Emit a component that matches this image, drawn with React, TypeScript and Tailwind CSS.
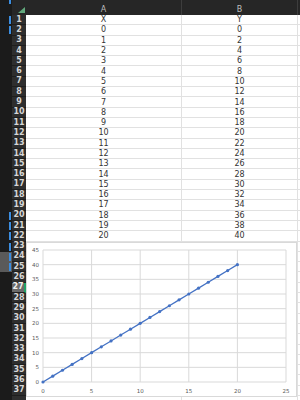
import React from 'react';

const rows = Array.from({ length: 38 }, (_, i) => i + 1);
const blueRows = [1, 2, 20, 21, 22, 23, 24, 25];

const cellValue = (row: number, col: 'A' | 'B') => {
  if (row === 1) return col === 'A' ? 'X' : 'Y';
  if (row >= 2 && row <= 22) {
    const x = row - 2;
    return String(col === 'A' ? x : x * 2);
  }
  return '';
};

// plot area inside the chart box
const px = (v: number) => 16 + (v / 25) * 243;
const py = (v: number) => 139 - (v / 45) * 132;

const Chart = () => {
  const points = Array.from({ length: 21 }, (_, i) => ({ x: i, y: i * 2 }));
  return (
    <div className="absolute left-[26px] top-[242px] w-[271px] h-[155px] bg-white border border-[#d9d9d9]">
      <svg width="271" height="155" className="block" style={{ fontFamily: '"DejaVu Sans", Verdana, sans-serif' }}>
        {[0, 5, 10, 15, 20, 25, 30, 35, 40, 45].map((v) => (
          <g key={`h${v}`}>
            <line x1={px(0)} x2={px(25)} y1={py(v)} y2={py(v)} stroke="#d9d9d9" strokeWidth="1" />
            <text x="12" y={py(v) + 2} fontSize="5.5" fill="#595959" textAnchor="end">
              {v}
            </text>
          </g>
        ))}
        {[0, 5, 10, 15, 20, 25].map((v) => (
          <g key={`v${v}`}>
            <line x1={px(v)} x2={px(v)} y1={py(0)} y2={py(45)} stroke="#d9d9d9" strokeWidth="1" />
            <text x={px(v)} y="150" fontSize="5.5" fill="#595959" textAnchor="middle">
              {v}
            </text>
          </g>
        ))}
        <polyline
          points={points.map((p) => `${px(p.x)},${py(p.y)}`).join(' ')}
          fill="none"
          stroke="#4472c4"
          strokeWidth="1.3"
        />
        {points.map((p) => (
          <circle key={p.x} cx={px(p.x)} cy={py(p.y)} r="1.6" fill="#4472c4" />
        ))}
      </svg>
    </div>
  );
};

const App = () => {
  return (
    <div
      className="relative w-[300px] h-[400px] overflow-hidden bg-white"
      style={{ fontFamily: '"DejaVu Sans", Verdana, sans-serif' }}
    >
      <div className="flex h-[15px] bg-[#262626]">
        <div className="w-[12px] bg-[#1b1b1b] flex justify-end">
          <div className="w-[2px] h-[4px] bg-[#3b8de0] mr-[1px]" />
        </div>
        <div className="w-[14px] flex items-end justify-end pb-[2px] pr-[1px]">
          <div className="w-0 h-0 border-l-[7px] border-l-transparent border-b-[6px] border-b-[#62a97c]" />
        </div>
        <div className="w-[156px] border-r border-[#3d3d3d] flex items-end justify-center text-[8px] leading-[11px] text-[#bdbdbd]">
          A
        </div>
        <div className="w-[116px] border-r border-[#3d3d3d] flex items-end justify-center text-[8px] leading-[11px] text-[#bdbdbd]">
          B
        </div>
        <div className="flex-1" />
      </div>

      {rows.map((r) => (
        <div key={r} className="flex h-[10.3px]">
          <div
            className={`w-[12px] flex items-center justify-end ${
              r === 24 || r === 25 ? 'bg-[#5a5a5a]' : 'bg-[#1b1b1b]'
            }`}
          >
            {blueRows.includes(r) && <div className="w-[2px] h-[8px] bg-[#3b8de0] mr-[1px]" />}
          </div>
          <div
            className={`w-[14px] flex items-center justify-center text-[8px] font-bold leading-none border-b border-[#1e1e1e] ${
              r === 27
                ? 'bg-[#6a6a6a] text-[#f0f0f0] border-r-2 border-r-[#21a366]'
                : 'bg-[#2e2e2e] text-[#d6d6d6]'
            }`}
          >
            {r < 38 ? r : ''}
          </div>
          <div className="w-[156px] border-b border-r border-[#e1e1e1] flex items-center justify-center pt-[1px] text-[8px] leading-none text-[#333]">
            {cellValue(r, 'A')}
          </div>
          <div className="w-[116px] border-b border-r border-[#e1e1e1] flex items-center justify-center pt-[1px] text-[8px] leading-none text-[#333]">
            {cellValue(r, 'B')}
          </div>
          <div className="flex-1 border-b border-[#e1e1e1]" />
        </div>
      ))}

      <Chart />
    </div>
  );
};

export default App;
